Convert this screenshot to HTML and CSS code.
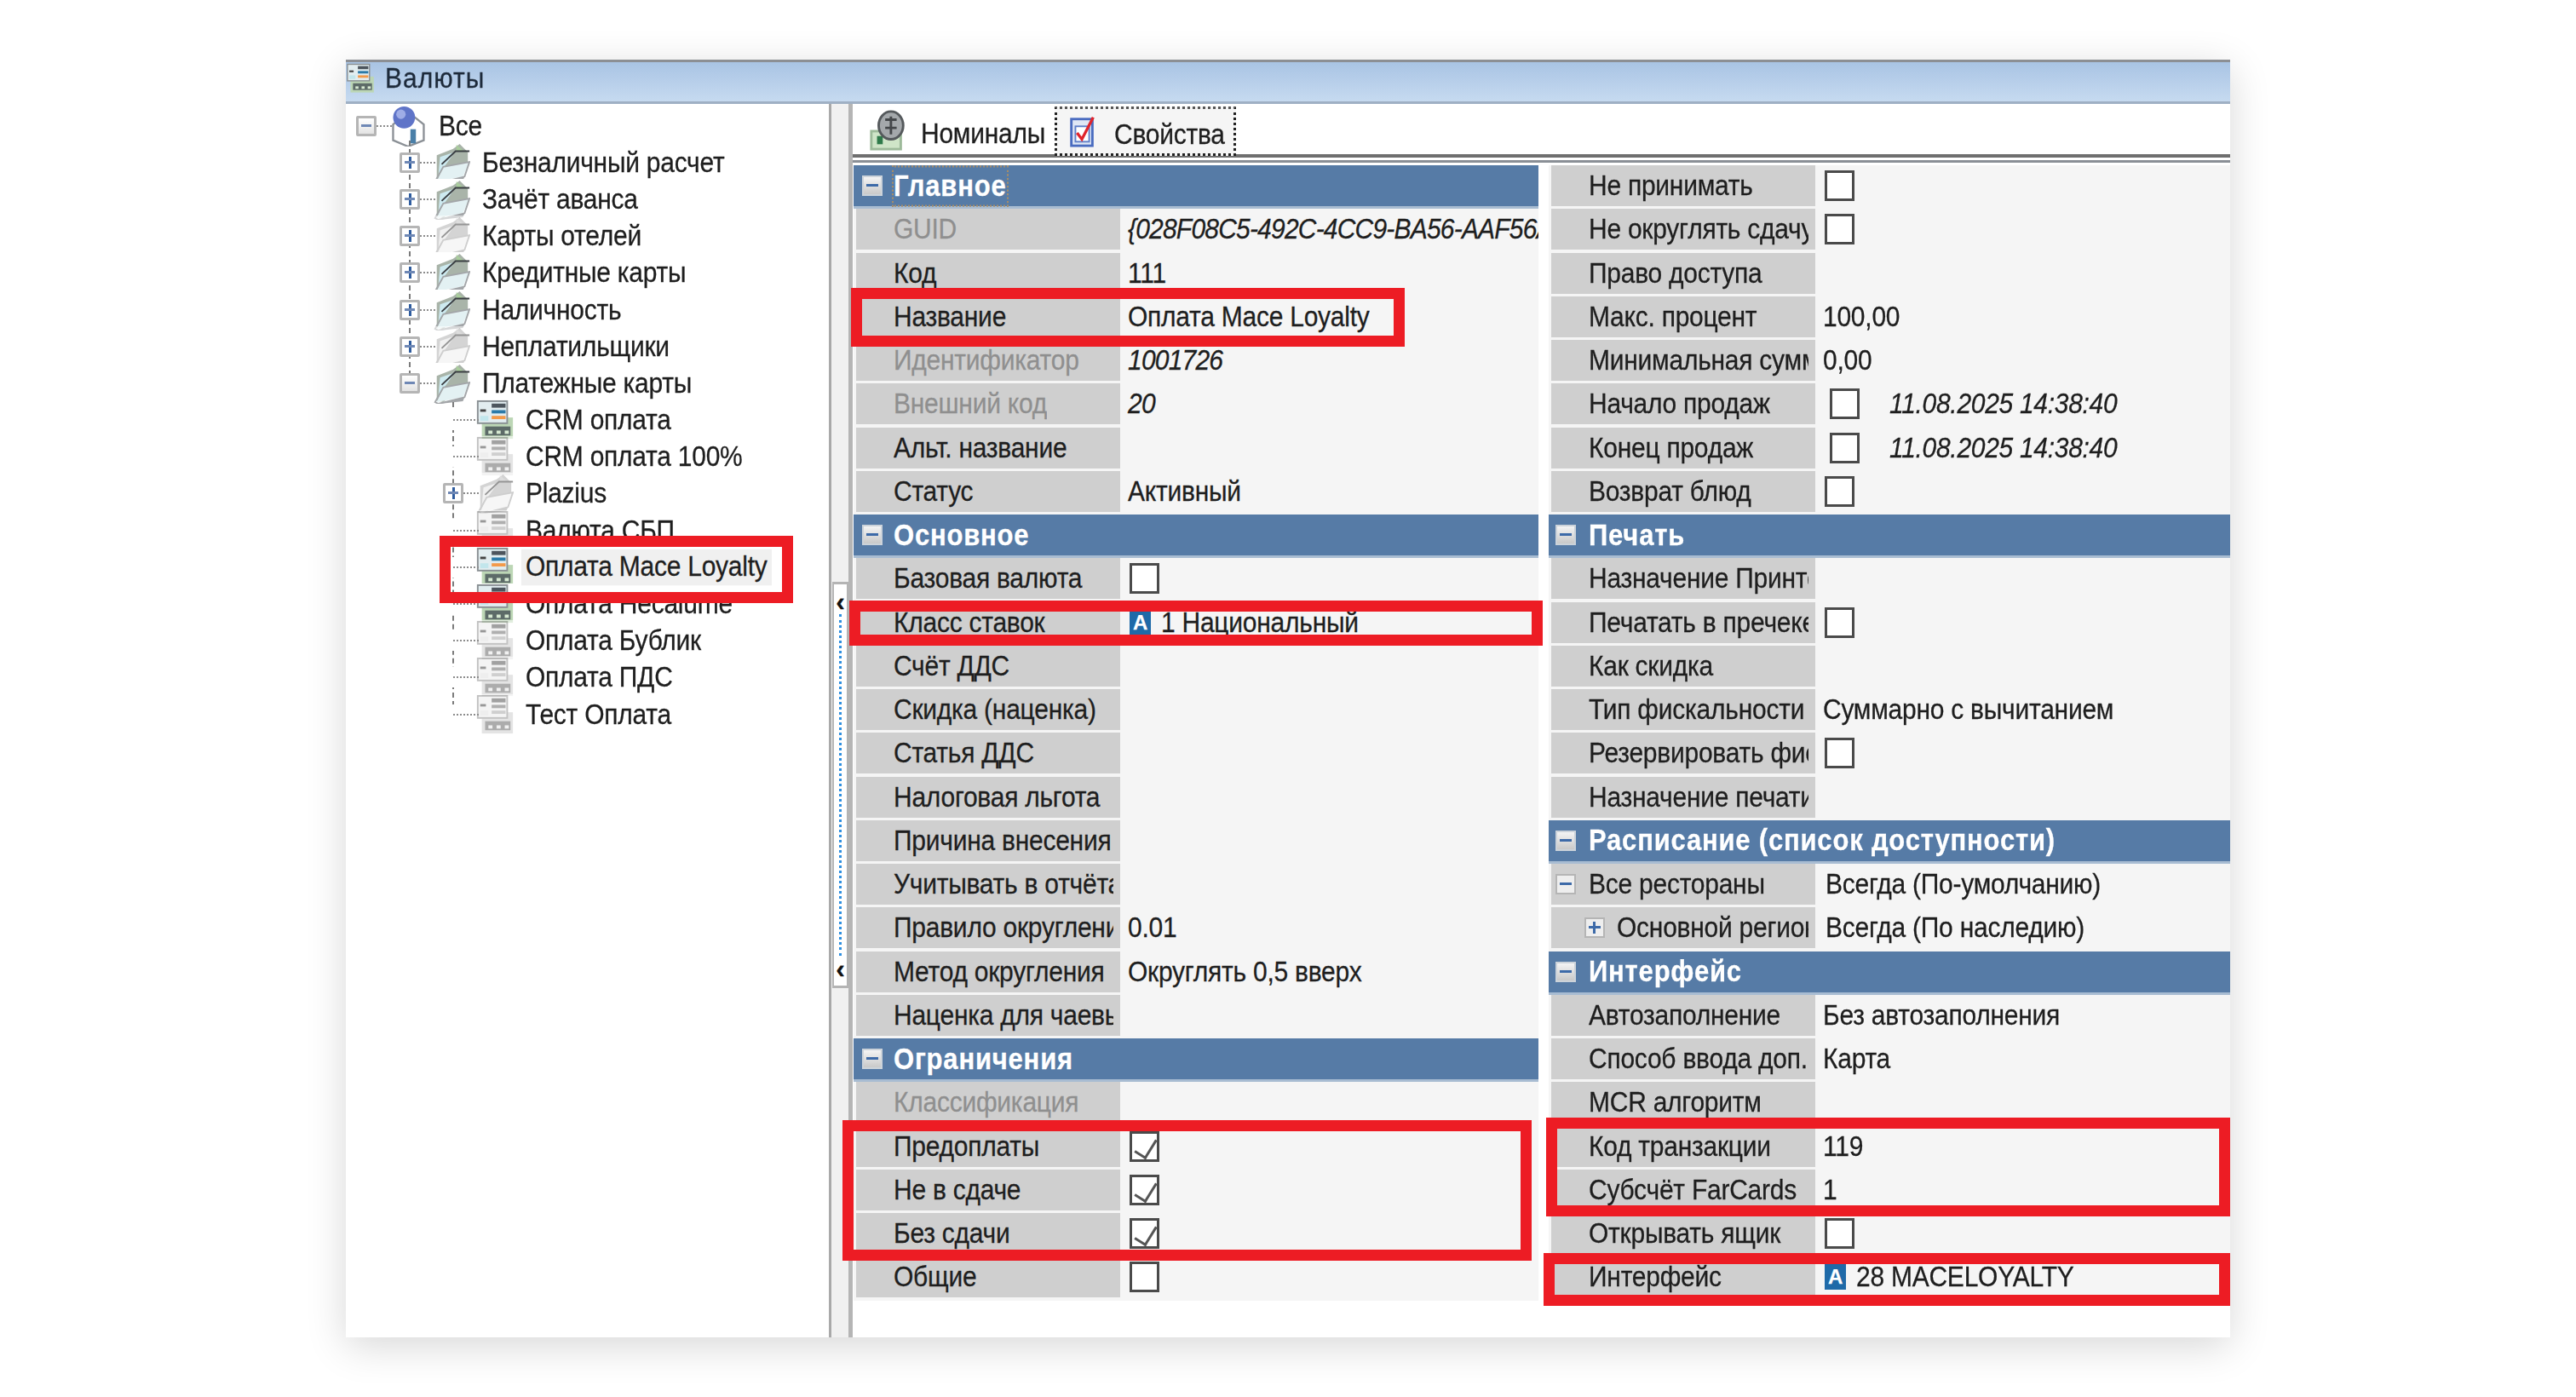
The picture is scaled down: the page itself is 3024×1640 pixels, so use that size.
FILE: index.html
```html
<!DOCTYPE html>
<html lang="ru">
<head>
<meta charset="utf-8">
<title>Валюты</title>
<link rel="stylesheet" href="styles.css">
</head>
<body>
<svg class="defs" width="0" height="0">
  <symbol id="folder" viewBox="0 0 44 50">
    <path d="M4 46 L4 16 L24 8 L32 2 L42 12 L42 24 L12 48 Z" fill="#a9b4a9"/>
    <path d="M8 18 L26 12 L6 40 Z" fill="#cdeaf0"/>
    <path d="M28 3 L36 10 L28 11 Z" fill="#a9cc9c"/>
    <path d="M10 27 L27 11 L44 11" fill="none" stroke="#3a3e42" stroke-width="2"/>
    <path d="M12 30 L44 24 L36 42 L4 48 Z" fill="#e3f1f3"/>
    <path d="M2 48 L12 30 L44 24 L38 42 L6 50 Z" fill="none" stroke="#a3a6a9" stroke-width="2"/>
    <path d="M6 50 L38 42 L36 47 L8 50 Z" fill="#a3a6a9"/>
  </symbol>
  <symbol id="term" viewBox="0 0 44 50">
    <rect x="6" y="22" width="38" height="26" fill="#bcd6b5"/>
    <rect x="10" y="33" width="31" height="11" fill="#5d6b68"/>
    <rect x="14" y="38" width="5" height="4" fill="#d7ead2"/>
    <rect x="24" y="38" width="5" height="4" fill="#d7ead2"/>
    <rect x="34" y="38" width="5" height="4" fill="#d7ead2"/>
    <rect x="1" y="2" width="36" height="27" fill="#e2edf0" stroke="#8a9094" stroke-width="2"/>
    <rect x="18" y="5" width="17" height="5" fill="#4d555d"/>
    <rect x="4" y="12" width="7" height="3" fill="#444"/>
    <rect x="18" y="13" width="17" height="4" fill="#2b7aa8"/>
    <rect x="18" y="20" width="17" height="4" fill="#f39a4a"/>
    <rect x="4" y="20" width="10" height="6" fill="#c2e6ec"/>
  </symbol>
  <symbol id="house" viewBox="0 0 44 52">
    <path d="M3 24 L22 8 L42 24 L42 44 L22 52 L3 44 Z" fill="#fff" stroke="#8b9096" stroke-width="2.5"/>
    <circle cx="17" cy="15" r="14" fill="#5f74c8"/>
    <circle cx="13" cy="11" r="6" fill="#9fade6"/>
    <rect x="25" y="30" width="7" height="18" fill="#4a7fa8"/>
  </symbol>
  <symbol id="coins" viewBox="0 0 44 50">
    <rect x="1" y="26" width="36" height="22" fill="#cfe5c8" stroke="#9dba9a" stroke-width="3"/>
    <rect x="8" y="32" width="7" height="10" fill="#2f7a4a"/>
    <ellipse cx="25" cy="19" rx="15" ry="17" fill="#a4a8ab" stroke="#55595c" stroke-width="3"/>
    <path d="M18 12 H32 M25 8 V30 M18 22 L32 22" stroke="#44474a" stroke-width="3"/>
  </symbol>
  <symbol id="props" viewBox="0 0 32 40">
    <rect x="2" y="5" width="26" height="33" fill="#dfe7f5" stroke="#4a6cc0" stroke-width="3"/>
    <rect x="7" y="14" width="17" height="19" fill="#fff" stroke="#5f7fc8" stroke-width="2"/>
    <path d="M9 22 L15 30 L29 3" fill="none" stroke="#e0242c" stroke-width="3.5"/>
  </symbol>
</svg>

<main class="window">
  <header class="title">
    <svg class="title-icon"><use href="#term"/></svg>
    <span>Валюты</span>
  </header>
  <div class="body">
    <nav class="tree">
      <div class="node l0"><i class="exp minus"></i><svg class="ico"><use href="#house"/></svg><span>Все</span></div>
      <div class="kids k1">
        <div class="node l1"><i class="exp plus"></i><svg class="ico"><use href="#folder"/></svg><span>Безналичный расчет</span></div>
        <div class="node l1"><i class="exp plus"></i><svg class="ico"><use href="#folder"/></svg><span>Зачёт аванса</span></div>
        <div class="node l1"><i class="exp plus"></i><svg class="ico off"><use href="#folder"/></svg><span>Карты отелей</span></div>
        <div class="node l1"><i class="exp plus"></i><svg class="ico"><use href="#folder"/></svg><span>Кредитные карты</span></div>
        <div class="node l1"><i class="exp plus"></i><svg class="ico"><use href="#folder"/></svg><span>Наличность</span></div>
        <div class="node l1"><i class="exp plus"></i><svg class="ico off"><use href="#folder"/></svg><span>Неплатильщики</span></div>
        <div class="node l1"><i class="exp minus"></i><svg class="ico"><use href="#folder"/></svg><span>Платежные карты</span></div>
      </div>
      <div class="kids k2">
        <div class="node l2"><i class="exp"></i><svg class="ico"><use href="#term"/></svg><span>CRM оплата</span></div>
        <div class="node l2"><i class="exp"></i><svg class="ico off"><use href="#term"/></svg><span>CRM оплата 100%</span></div>
        <div class="node l2"><i class="exp plus"></i><svg class="ico off"><use href="#folder"/></svg><span>Plazius</span></div>
        <div class="node l2"><i class="exp"></i><svg class="ico off"><use href="#term"/></svg><span>Валюта СБП</span></div>
        <div class="node l2"><i class="exp"></i><svg class="ico"><use href="#term"/></svg><span class="sel">Оплата Mace Loyalty</span></div>
        <div class="node l2"><i class="exp"></i><svg class="ico"><use href="#term"/></svg><span>Оплата Hecalume</span></div>
        <div class="node l2"><i class="exp"></i><svg class="ico off"><use href="#term"/></svg><span>Оплата Бублик</span></div>
        <div class="node l2"><i class="exp"></i><svg class="ico off"><use href="#term"/></svg><span>Оплата ПДС</span></div>
        <div class="node l2"><i class="exp"></i><svg class="ico off"><use href="#term"/></svg><span>Тест Оплата</span></div>
      </div>
    </nav>
    <div class="split">
      <div class="handle"><b>‹</b><i class="dots"></i><b>‹</b></div>
    </div>
    <section class="main">
      <div class="tabs">
        <div class="tab"><svg class="tab-ico"><use href="#coins"/></svg><span>Номиналы</span></div>
        <div class="tab active"><svg class="tab-ico small"><use href="#props"/></svg><span>Свойства</span></div>
      </div>
      <div class="grid">
        <div class="col left">
          <div class="sec"><i class="box minus"></i><span class="focus">Главное</span></div>
          <div class="row"><div class="lab dim"><span>GUID</span></div><div class="val it"><span>{028F08C5-492C-4CC9-BA56-AAF56A</span></div></div>
          <div class="row"><div class="lab"><span>Код</span></div><div class="val"><span>111</span></div></div>
          <div class="row"><div class="lab"><span>Название</span></div><div class="val"><span>Оплата Mace Loyalty</span></div></div>
          <div class="row"><div class="lab dim"><span>Идентификатор</span></div><div class="val it"><span>1001726</span></div></div>
          <div class="row"><div class="lab dim"><span>Внешний код</span></div><div class="val it"><span>20</span></div></div>
          <div class="row"><div class="lab"><span>Альт. название</span></div><div class="val"></div></div>
          <div class="row"><div class="lab"><span>Статус</span></div><div class="val"><span>Активный</span></div></div>

          <div class="sec"><i class="box minus"></i><span>Основное</span></div>
          <div class="row"><div class="lab"><span>Базовая валюта</span></div><div class="val"><i class="cb"></i></div></div>
          <div class="row"><div class="lab"><span>Класс ставок</span></div><div class="val"><i class="glyph">A</i><span>1 Национальный</span></div></div>
          <div class="row"><div class="lab"><span>Счёт ДДС</span></div><div class="val"></div></div>
          <div class="row"><div class="lab"><span>Скидка (наценка)</span></div><div class="val"></div></div>
          <div class="row"><div class="lab"><span>Статья ДДС</span></div><div class="val"></div></div>
          <div class="row"><div class="lab"><span>Налоговая льгота</span></div><div class="val"></div></div>
          <div class="row"><div class="lab"><span>Причина внесения</span></div><div class="val"></div></div>
          <div class="row"><div class="lab"><span>Учитывать в отчётах</span></div><div class="val"></div></div>
          <div class="row"><div class="lab"><span>Правило округления</span></div><div class="val"><span>0.01</span></div></div>
          <div class="row"><div class="lab"><span>Метод округления</span></div><div class="val"><span>Округлять 0,5 вверх</span></div></div>
          <div class="row"><div class="lab"><span>Наценка для чаевых</span></div><div class="val"></div></div>

          <div class="sec"><i class="box minus"></i><span>Ограничения</span></div>
          <div class="row"><div class="lab dim"><span>Классификация</span></div><div class="val"></div></div>
          <div class="row"><div class="lab"><span>Предоплаты</span></div><div class="val"><i class="cb on"></i></div></div>
          <div class="row"><div class="lab"><span>Не в сдаче</span></div><div class="val"><i class="cb on"></i></div></div>
          <div class="row"><div class="lab"><span>Без сдачи</span></div><div class="val"><i class="cb on"></i></div></div>
          <div class="row"><div class="lab"><span>Общие</span></div><div class="val"><i class="cb"></i></div></div>
        </div>

        <div class="col right">
          <div class="row"><div class="lab"><span>Не принимать</span></div><div class="val"><i class="cb"></i></div></div>
          <div class="row"><div class="lab"><span>Не округлять сдачу</span></div><div class="val"><i class="cb"></i></div></div>
          <div class="row"><div class="lab"><span>Право доступа</span></div><div class="val"></div></div>
          <div class="row"><div class="lab"><span>Макс. процент</span></div><div class="val"><span>100,00</span></div></div>
          <div class="row"><div class="lab"><span>Минимальная сумма</span></div><div class="val"><span>0,00</span></div></div>
          <div class="row"><div class="lab"><span>Начало продаж</span></div><div class="val date"><i class="cb"></i><span class="when">11.08.2025 14:38:40</span></div></div>
          <div class="row"><div class="lab"><span>Конец продаж</span></div><div class="val date"><i class="cb"></i><span class="when">11.08.2025 14:38:40</span></div></div>
          <div class="row"><div class="lab"><span>Возврат блюд</span></div><div class="val"><i class="cb"></i></div></div>

          <div class="sec"><i class="box minus"></i><span>Печать</span></div>
          <div class="row"><div class="lab"><span>Назначение Принтера</span></div><div class="val"></div></div>
          <div class="row"><div class="lab"><span>Печатать в пречеке</span></div><div class="val"><i class="cb"></i></div></div>
          <div class="row"><div class="lab"><span>Как скидка</span></div><div class="val"></div></div>
          <div class="row"><div class="lab"><span>Тип фискальности</span></div><div class="val"><span>Суммарно с вычитанием</span></div></div>
          <div class="row"><div class="lab"><span>Резервировать фискально</span></div><div class="val"><i class="cb"></i></div></div>
          <div class="row"><div class="lab"><span>Назначение печати</span></div><div class="val"></div></div>

          <div class="sec"><i class="box minus"></i><span>Расписание (список доступности)</span></div>
          <div class="row"><div class="lab tree-lab"><i class="box minus pale"></i><span>Все рестораны</span></div><div class="val sched"><span>Всегда (По-умолчанию)</span></div></div>
          <div class="row"><div class="lab tree-lab sub"><i class="box plus pale"></i><span>Основной регион</span></div><div class="val sched"><span>Всегда (По наследию)</span></div></div>

          <div class="sec"><i class="box minus"></i><span>Интерфейс</span></div>
          <div class="row"><div class="lab"><span>Автозаполнение</span></div><div class="val"><span>Без автозаполнения</span></div></div>
          <div class="row"><div class="lab"><span>Способ ввода доп.информации</span></div><div class="val"><span>Карта</span></div></div>
          <div class="row"><div class="lab"><span>MCR алгоритм</span></div><div class="val"></div></div>
          <div class="row"><div class="lab"><span>Код транзакции</span></div><div class="val"><span>119</span></div></div>
          <div class="row"><div class="lab"><span>Субсчёт FarCards</span></div><div class="val"><span>1</span></div></div>
          <div class="row"><div class="lab"><span>Открывать ящик</span></div><div class="val"><i class="cb"></i></div></div>
          <div class="row"><div class="lab"><span>Интерфейс</span></div><div class="val"><i class="glyph">A</i><span>28 MACELOYALTY</span></div></div>
        </div>
      </div>
    </section>
  </div>
  <div class="mark m-tree"></div>
  <div class="mark m-name"></div>
  <div class="mark m-class"></div>
  <div class="mark m-limits"></div>
  <div class="mark m-code"></div>
  <div class="mark m-iface"></div>
</main>
</body>
</html>
```

FILE: styles.css
```css
* { box-sizing: border-box; }
html, body { margin: 0; height: 1640px; overflow: hidden; background: #fff; }
body {
  padding: 70px 406px;
  font: 30px/1 "Liberation Sans", Arial, sans-serif;
  letter-spacing: -.25px;
  color: #1e1e1e;
  -webkit-text-stroke: .25px currentColor;
}
.defs { position: absolute; }
i { font-style: normal; display: block; }

/* the source is an upscaled low-res capture: letters are taller than wide */
.title span, .node span, .tab span, .sec span, .lab span, .val span { transform: scaleY(1.13); }

.window {
  position: relative;
  width: 2212px;
  height: 1500px;
  display: flex;
  flex-direction: column;
  background: #fff;
  box-shadow: 0 10px 44px rgba(0, 0, 0, .16);
}
.title, .body { filter: blur(.7px); }
.title {
  height: 52px;
  flex: none;
  display: flex;
  align-items: center;
  gap: 12px;
  padding-bottom: 8px;
  border-top: 3px solid #8c8f94;
  border-bottom: 3px solid #9fb0c4;
  background: linear-gradient(#a9c4e4, #c6daf0);
  letter-spacing: 1px;
  color: #1d2a3a;
}
.title-icon { width: 34px; height: 36px; }

.body { flex: 1; display: flex; min-height: 0; }

/* tree */
.tree {
  flex: none;
  width: 570px;
  padding-top: 4px;
  border-right: 3px solid #a9a9a9;
  background: #fff;
}
.node { position: relative; height: 43.2px; display: flex; align-items: center; white-space: nowrap; }
.l0 { padding-left: 12px; }
.l1 { padding-left: 63px; }
.l2 { padding-left: 114px; }
.exp {
  position: relative;
  z-index: 1;
  flex: none;
  width: 24px;
  height: 24px;
  margin-right: 15px;
}
.exp::after {
  content: "";
  position: absolute;
  left: 12px;
  top: 11px;
  width: 30px;
  border-top: 2px dotted #8d8d8d;
  z-index: -1;
}
.exp.plus, .exp.minus { border: 3px solid #b5b5b5; border-radius: 2px; background: #fff linear-gradient(#fff, #e3e3e3); }
.exp.plus::after, .exp.minus::after { left: 21px; top: 8px; width: 18px; }
.exp.plus::before, .exp.minus::before {
  content: "";
  position: absolute;
  left: 3px;
  top: 7px;
  width: 12px;
  height: 3px;
  background: #6f88b5;
}
.exp.plus { background: #fff linear-gradient(#2f5c9e, #2f5c9e) center / 3px 14px no-repeat; }
.ico { flex: none; width: 44px; height: 48px; margin-right: 14px; background: #fff; position: relative; }
.ico.off { filter: grayscale(1) opacity(.55); }
.node .sel { background: #f0f0f0; margin-left: -5px; padding: 3px 5px 5px; }
.kids { position: relative; }
.kids::before {
  content: "";
  position: absolute;
  top: 0;
  bottom: 21px;
  border-left: 2px dashed #7b7b7b;
}
.k1::before { left: 74px; top: -4px; }
.k2::before { left: 125px; }
.k1 .exp, .k2 .exp { background-color: #fff; }

/* splitter */
.split {
  flex: none;
  width: 20px;
  padding-top: 561px;
  background: #f1f1f1;
}
.handle {
  height: 477px;
  margin-left: 1px;
  padding: 5px 0;
  display: flex;
  flex-direction: column;
  align-items: center;
  background: #fff;
  border: 2px solid #b4b4b4;
  border-width: 3px 2px;
}
.handle b { font: bold 32px/30px "Liberation Sans", sans-serif; color: #111; }
.dots { flex: 1; width: 3px; margin: 0 auto; border-left: 3px dotted #2e8fe0; }

/* main */
.main { flex: 1; min-width: 0; display: flex; flex-direction: column; border-left: 5px solid #b5b5b5; }
.tabs {
  height: 63px;
  flex: none;
  display: flex;
  align-items: flex-end;
  padding-left: 20px;
  margin-bottom: 9px;
  border-bottom: 4px solid #6f6f6f;
  box-shadow: 0 3px 0 #fff, 0 6px 0 #8a8f96;
}
.tab { width: 217px; height: 56px; display: flex; align-items: center; gap: 16px; }
.tab span { padding-top: 6px; }
.tab-ico { flex: none; width: 44px; height: 48px; }
.tab-ico.small { width: 32px; height: 38px; }
.tab.active {
  width: 213px;
  height: 58px;
  margin-bottom: -2px;
  padding: 0 0 0 14px;
  gap: 21px;
  background: #f5f5f5;
  border: 3px dotted #222;
  border-top-color: #555;
}

.grid { display: flex; gap: 12px; padding-left: 1px; }
.col { flex: none; }
.left { width: 804px; }
.right { width: 800px; }

.sec {
  height: 51.25px;
  display: flex;
  align-items: center;
  gap: 13px;
  padding-left: 10px;
  background: #567ba6;
  border-bottom: 3px solid #a8bcd2;
  color: #fff;
  font-weight: bold;
  font-size: 31px;
  letter-spacing: .8px;
}
.right .sec { padding-left: 8px; gap: 15px; }
.sec .focus { outline: 2px dotted #a58d6a; padding: 4px 0; }
.box {
  position: relative;
  flex: none;
  width: 24px;
  height: 24px;
  background: linear-gradient(#f4f4f4, #c9c9c9);
  border: 2px solid #ccd3da;
}
.box::before {
  content: "";
  position: absolute;
  left: 3px;
  top: 8px;
  width: 14px;
  height: 3px;
  background: #3d6aa8;
}
.box.plus::after {
  content: "";
  position: absolute;
  left: 8px;
  top: 3px;
  width: 3px;
  height: 14px;
  background: #3d6aa8;
}
.box.pale { background: #eee; border-color: #b5b5b5; }

.row {
  height: 51.25px;
  display: flex;
  background: #f5f5f5;
}
.lab {
  flex: none;
  width: 313px;
  height: 48px;
  display: flex;
  align-items: center;
  padding: 0 8px 0 44px;
  border-left: 3px solid #f5f5f5;
  background: #cfcfcf;
  background-clip: padding-box;
  white-space: nowrap;
}
.lab span { display: block; overflow: hidden; flex: 1; line-height: 40px; }
.lab.dim { color: #8f8f8f; }
.tree-lab { padding-left: 5px; gap: 15px; }
.tree-lab.sub { padding-left: 39px; gap: 14px; }
.val {
  flex: 1;
  min-width: 0;
  height: 48px;
  display: flex;
  align-items: center;
  padding-left: 9px;
  white-space: nowrap;
  overflow: hidden;
}
.val.it { font-style: italic; letter-spacing: -.8px; }
.val.sched { padding-left: 12px; }
.cb {
  flex: none;
  width: 35px;
  height: 36px;
  margin-left: 2px;
  border: 3px solid #4a4a4a;
  background: #fff;
  position: relative;
}
.cb.on::after {
  content: "";
  position: absolute;
  left: 8px;
  top: 2px;
  width: 13px;
  height: 23px;
  border: solid #555;
  border-width: 0 3px 3px 0;
  transform: rotate(32deg);
}
.date .cb { margin-left: 8px; }
.val .when { margin-left: 35px; font-style: italic; letter-spacing: -.3px; }
.glyph {
  flex: none;
  width: 25px;
  height: 30px;
  margin: 0 12px 0 2px;
  background: #1f6aa8;
  color: #fff;
  text-align: center;
  font: bold 24px/30px "Liberation Sans", sans-serif;
}

/* red call-out frames */
.mark { position: absolute; border: 13px solid #ed1c24; }
.m-tree { left: 110px; top: 559px; width: 415px; height: 79px; }
.m-name { left: 593px; top: 268px; width: 650px; height: 69px; }
.m-class { left: 591px; top: 635px; width: 814px; height: 53px; }
.m-limits { left: 583px; top: 1245px; width: 809px; height: 165px; }
.m-code { left: 1409px; top: 1242px; width: 803px; height: 116px; }
.m-iface { left: 1406px; top: 1401px; width: 806px; height: 62px; }
```
